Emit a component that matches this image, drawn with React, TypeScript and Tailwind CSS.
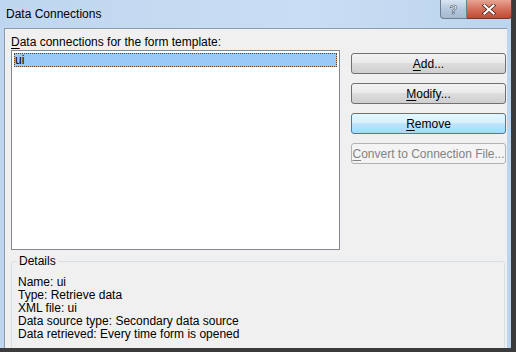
import React from 'react';

const font = { fontFamily: '"Liberation Sans", Arial, sans-serif' };

const Btn: React.FC<{ ul: string; rest: string; kind?: 'normal' | 'focus' | 'disabled' }> = ({ ul, rest, kind = 'normal' }) => {
  const cls =
    kind === 'focus'
      ? 'border-[#3c7fb1] bg-[linear-gradient(#eaf6fd_0%,#d9f0fc_45%,#bee6fd_50%,#a7d9f5_100%)] text-black'
      : kind === 'disabled'
      ? 'border-[#adb2b5] bg-[#f4f4f4] text-[#838383]'
      : 'border-[#707070] bg-[linear-gradient(#f2f2f2_0%,#ebebeb_45%,#dddddd_50%,#cfcfcf_100%)] text-black';
  return (
    <div className={`h-[21px] w-[155px] rounded-[3px] border flex items-center justify-center text-[12px] leading-none whitespace-nowrap ${cls}`}>
      <span>
        <span className="underline underline-offset-2">{ul}</span>
        {rest}
      </span>
    </div>
  );
};

export default function App() {
  return (
    <div className="w-[516px] h-[354px] bg-white overflow-hidden" style={font}>
      <div className="w-[516px] h-[352px] border-r-[5px] border-b-[4px] border-[#3b3b3b] bg-[linear-gradient(90deg,#bed6ef,#c9def4_60%,#bcd4ee)] flex flex-col">
        {/* title bar */}
        <div className="h-[28px] flex items-start shrink-0">
          <div className="pl-[6px] pt-[7px] text-[12px] leading-[14px] text-black flex-1">Data Connections</div>
          <div className="flex mr-[-1px]">
            <div className="w-[27px] h-[19px] border border-[#6f7f92] border-t-0 rounded-bl-[4px] bg-[linear-gradient(#d8e4f1,#b6c8dc_50%,#a5b9cf)] flex items-center justify-center">
              <span className="text-[13px] font-bold text-white leading-none" style={{ WebkitTextStroke: '0.6px #4a5a6e' }}>?</span>
            </div>
            <div className="w-[45px] h-[19px] border border-[#6f3a33] border-t-0 border-l-0 rounded-br-[4px] bg-[linear-gradient(#e8a493,#d4705c_50%,#c24a33)] flex items-center justify-center">
              <svg width="14" height="11" viewBox="0 0 14 11">
                <path d="M2.5 1.5 L11.5 9.5 M11.5 1.5 L2.5 9.5" stroke="#3b2320" strokeWidth="3.6" strokeLinecap="square" />
                <path d="M2.5 1.5 L11.5 9.5 M11.5 1.5 L2.5 9.5" stroke="#ffffff" strokeWidth="2.2" strokeLinecap="square" />
              </svg>
            </div>
          </div>
        </div>
        {/* client */}
        <div className="flex-1 ml-[4px] mr-[4px] border-l border-t border-[#8e9aa8] bg-[#f0f0f0] pl-[6px] pr-[1px] pt-[6px] text-[12px] text-black overflow-hidden">
          <div className="leading-[15px] h-[15px]">
            <span className="underline underline-offset-2">D</span>ata connections for the form template:
          </div>
          <div className="flex">
            <div className="w-[329px] h-[200px] border border-[#828790] bg-white p-[2px]">
              <div className="h-[14px] bg-[#99c9f7] outline-1 outline-dotted outline-[#6b3a10] -outline-offset-1 pl-[1px] leading-[14px]">ui</div>
            </div>
            <div className="ml-[11px] flex flex-col gap-[9px] pt-[3px]">
              <Btn ul="A" rest="dd..." />
              <Btn ul="M" rest="odify..." />
              <Btn ul="R" rest="emove" kind="focus" />
              <Btn ul="C" rest="onvert to Connection File..." kind="disabled" />
            </div>
          </div>
          <div className="relative mt-[11px] mr-[1px] h-[100px] border border-[#d5dfe5] rounded-[3px]">
            <div className="absolute -top-[8px] left-[5px] bg-[#f0f0f0] px-[2px] leading-[15px]">Details</div>
            <div className="pl-[6px] pt-[14px] leading-[13px] flex flex-col">
              <span>Name: ui</span>
              <span>Type: Retrieve data</span>
              <span>XML file: ui</span>
              <span>Data source type: Secondary data source</span>
              <span>Data retrieved: Every time form is opened</span>
            </div>
          </div>
        </div>
      </div>
    </div>
  );
}
